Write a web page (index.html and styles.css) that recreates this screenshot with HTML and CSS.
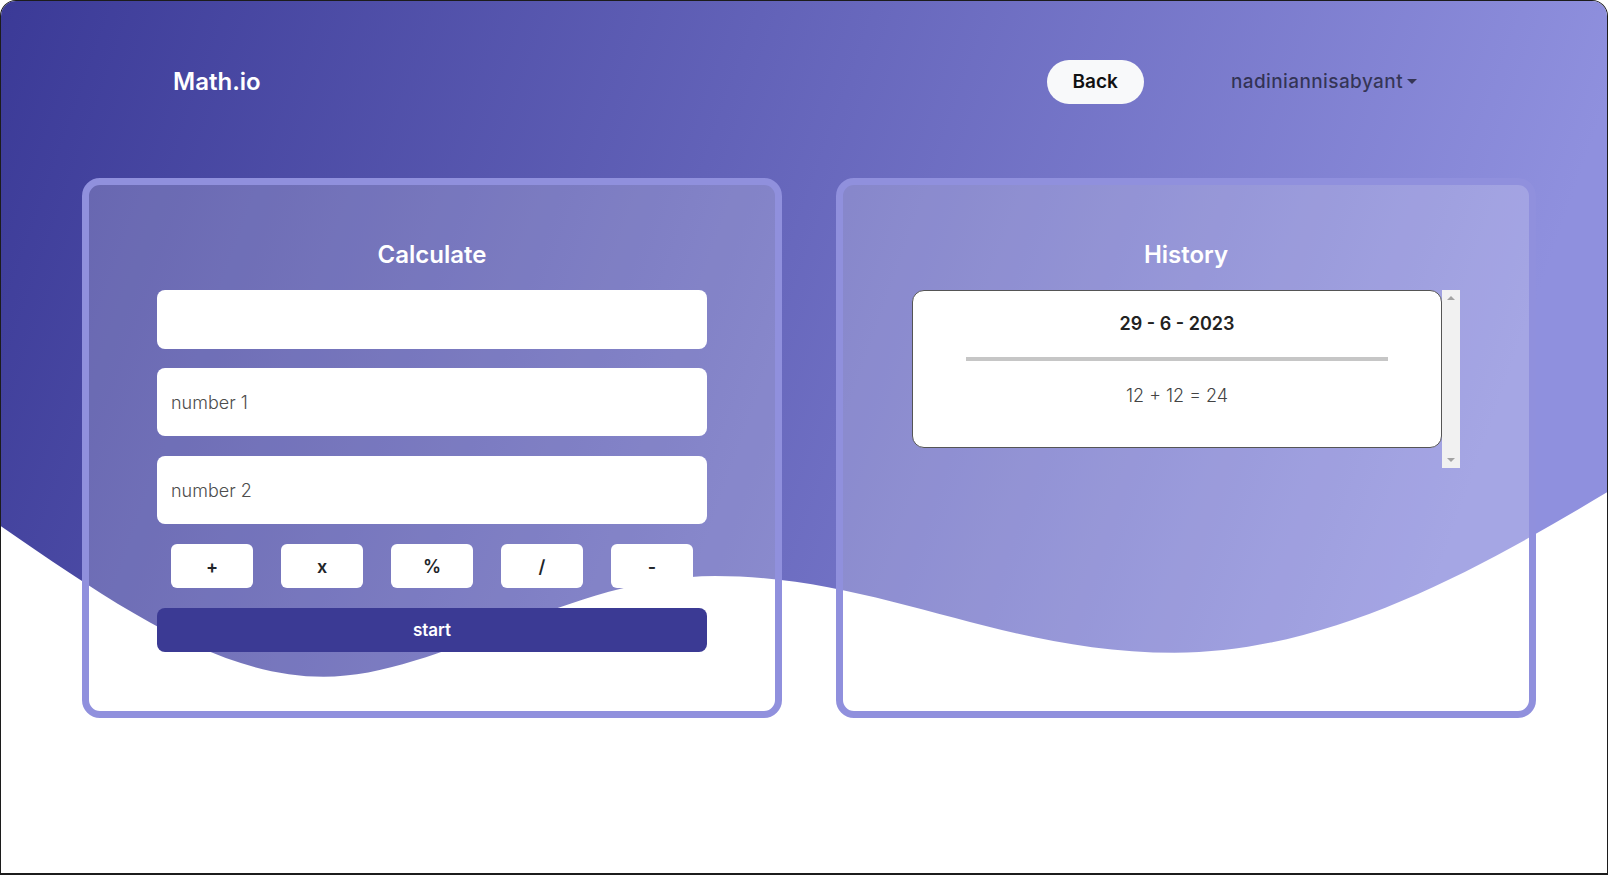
FILE: index.html
```html
<!DOCTYPE html>
<html>
<head>
  <title>Math.io</title>
  <link rel="stylesheet" href="styles.css">
</head>
<body>
  <div class="page">
    <svg class="bg-wave" viewBox="0 0 1608 875" preserveAspectRatio="none">
      <defs>
        <linearGradient id="waveGrad" x1="0" y1="0" x2="1" y2="0.15">
          <stop offset="0" stop-color="#3b3a97"/>
          <stop offset="1" stop-color="#8f90de"/>
        </linearGradient>
      </defs>
      <path fill="url(#waveGrad)" d="M0,0 L0,527 C120,610 220,678 323,678 C440,678 570,577 715,577 C880,577 1000,654 1175,654 C1330,654 1480,570 1608,493 L1608,0 Z"/>
    </svg>

    <nav class="navbar">
      <a class="brand" href="#">Math.io</a>
      <div class="nav-right">
        <button class="btn-back">Back</button>
        <a class="user dropdown-toggle" href="#">nadiniannisabyant</a>
      </div>
    </nav>

    <main class="content">
      <section class="card">
        <h3 class="card-title">Calculate</h3>
        <input type="text" class="field field-result" id="result">
        <input type="number" class="field" id="num1" placeholder="number 1">
        <input type="number" class="field" id="num2" placeholder="number 2">
        <div class="ops">
          <button class="op">+</button>
          <button class="op">x</button>
          <button class="op">%</button>
          <button class="op">/</button>
          <button class="op">-</button>
        </div>
        <button class="btn-start">start</button>
      </section>

      <section class="card">
        <h3 class="card-title">History</h3>
        <div class="history-list">
          <div class="history-item">
            <h5>29 - 6 - 2023</h5>
            <hr>
            <p>12 + 12 = 24</p>
          </div>
          <div class="scroll-rail"></div>
        </div>
      </section>
    </main>
  </div>
</body>
</html>
```

FILE: styles.css
```css
* {
  box-sizing: border-box;
}

body {
  margin: 0;
  background-color: #fff;
  font-family: Inter, "Open Sans", sans-serif;
}

.page {
  position: relative;
  height: 875px;
  overflow: hidden;
  border: 1px solid #1c1c1c;
  border-bottom-width: 2px;
  border-radius: 16px 16px 0 0;
}

.bg-wave {
  position: absolute;
  top: 0;
  left: 0;
  width: 100%;
  height: 100%;
  z-index: 0;
}

.navbar {
  position: relative;
  z-index: 1;
  height: 161px;
  display: flex;
  align-items: center;
  justify-content: space-between;
  padding: 0 190px 0 172px;
}

.brand {
  color: #fff;
  font-size: 24px;
  font-weight: 600;
  text-decoration: none;
}

.nav-right {
  display: flex;
  align-items: center;
  gap: 87px;
}

.btn-back {
  height: 44px;
  padding: 0 26px;
  border: none;
  border-radius: 22px;
  background-color: #f8f9fa;
  color: #111;
  font-family: inherit;
  font-size: 19px;
  font-weight: 600;
}

.user {
  color: rgba(0, 0, 0, 0.6);
  font-size: 19px;
  font-weight: 500;
  text-decoration: none;
  letter-spacing: 0.4px;
}

.dropdown-toggle::after {
  content: "";
  display: inline-block;
  margin-left: 4px;
  vertical-align: 4px;
  border-top: 5px solid;
  border-right: 5px solid transparent;
  border-left: 5px solid transparent;
}

.content {
  position: relative;
  z-index: 1;
  display: flex;
  gap: 54px;
  padding: 16px 0 0 81px;
}

.card {
  width: 700px;
  height: 540px;
  display: flex;
  flex-direction: column;
  align-items: center;
  padding-top: 50px;
  border: 7px solid #9090dd;
  border-radius: 18px;
  background-color: rgba(255, 255, 255, 0.2);
}

.card-title {
  margin: 0 0 15px;
  color: #fff;
  font-size: 24px;
  font-weight: 600;
  line-height: 40px;
}

.field {
  width: 550px;
  height: 68px;
  margin-bottom: 20px;
  padding: 0 14px;
  border: none;
  border-radius: 8px;
  background-color: #fff;
  color: #333;
  font-family: inherit;
  font-size: 18px;
  font-weight: 300;
  outline: none;
}

.field::placeholder {
  color: #4d4d4d;
}

.field-result {
  height: 59px;
  margin-bottom: 19px;
}

.ops {
  width: 550px;
  display: flex;
  justify-content: space-around;
  margin-bottom: 20px;
}

.op {
  width: 82px;
  height: 44px;
  border: none;
  border-radius: 6px;
  background-color: #fff;
  color: #212529;
  font-family: inherit;
  font-size: 18px;
  font-weight: 600;
}

.btn-start {
  width: 550px;
  height: 44px;
  border: none;
  border-radius: 8px;
  background-color: #3b3a94;
  color: #fff;
  font-family: inherit;
  font-size: 17px;
  font-weight: 600;
}

.history-list {
  width: 548px;
  height: 178px;
  display: flex;
  align-items: flex-start;
}

.history-item {
  width: 530px;
  padding-top: 19px;
  border: 1px solid #555;
  border-radius: 12px;
  background-color: #fff;
  text-align: center;
}

.history-item h5 {
  margin: 0;
  color: #222;
  font-size: 18px;
  font-weight: 600;
  line-height: 27px;
}

.history-item hr {
  width: 80%;
  height: 4px;
  margin: 20px auto 21px;
  border: none;
  background-color: #c6c6c6;
}

.history-item p {
  margin: 0 0 38px;
  color: #444;
  font-size: 18px;
  font-weight: 300;
  line-height: 27px;
}

.scroll-rail {
  width: 18px;
  height: 178px;
  display: flex;
  flex-direction: column;
  justify-content: space-between;
  align-items: center;
  padding: 6px 0;
  background-color: #f1f1f1;
}

.scroll-rail::before,
.scroll-rail::after {
  content: "";
  border-right: 4px solid transparent;
  border-left: 4px solid transparent;
}

.scroll-rail::before {
  border-bottom: 4px solid #a3a3a3;
}

.scroll-rail::after {
  border-top: 4px solid #a3a3a3;
}
```
